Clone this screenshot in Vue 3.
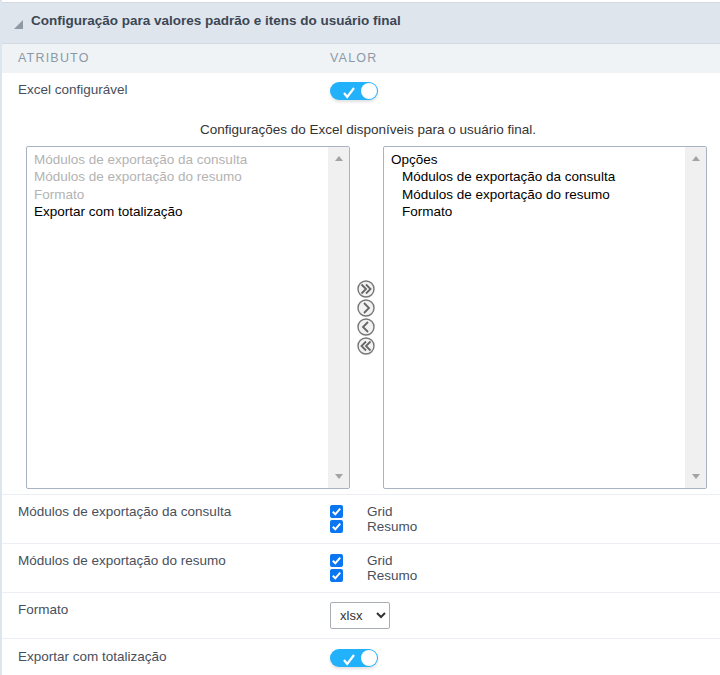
<script setup>
const leftItems = [
  { label: 'Módulos de exportação da consulta', off: true },
  { label: 'Módulos de exportação do resumo', off: true },
  { label: 'Formato', off: true },
  { label: 'Exportar com totalização', off: false }
]
const rightItems = [
  { label: 'Opções', sub: false },
  { label: 'Módulos de exportação da consulta', sub: true },
  { label: 'Módulos de exportação do resumo', sub: true },
  { label: 'Formato', sub: true }
]
const moves = [
  { name: 'all-right', d: 'M4.5 4.5 9 9 4.5 13.5M9 4.5 13.5 9 9 13.5' },
  { name: 'right', d: 'M7 4 12 9 7 14' },
  { name: 'left', d: 'M11 4 6 9 11 14' },
  { name: 'all-left', d: 'M9 4.5 4.5 9 9 13.5M13.5 4.5 9 9 13.5 13.5' }
]
const checkRows = ['Módulos de exportação da consulta', 'Módulos de exportação do resumo']
</script>

<template>
  <div class="page">
    <div class="panel-title">
      <span class="caret"></span>
      <span>Configuração para valores padrão e itens do usuário final</span>
    </div>
    <div class="row head">
      <div class="col-a">ATRIBUTO</div>
      <div>VALOR</div>
    </div>
    <div class="row first">
      <div class="col-a label">Excel configurável</div>
      <div class="toggle">
        <svg class="tick" width="14" height="13" viewBox="0 0 14 13"><path d="M2 7 5.2 11 12 2" fill="none" stroke="#fff" stroke-width="2.2"/></svg>
        <span class="knob"></span>
      </div>
    </div>
    <div class="double">
      <div class="double-title">Configurações do Excel disponíveis para o usuário final.</div>
      <div class="double-body">
        <div class="listbox">
          <div class="items">
            <div v-for="i in leftItems" :key="i.label" :class="{ off: i.off }">{{ i.label }}</div>
          </div>
          <div class="scroll"><span class="up"></span><span class="down"></span></div>
        </div>
        <div class="moves">
          <svg v-for="m in moves" :key="m.name" width="18" height="18" viewBox="0 0 18 18">
            <circle cx="9" cy="9" r="8" fill="#f2f2f2" stroke="#777" stroke-width="1.4"/>
            <path :d="m.d" fill="none" stroke="#666" stroke-width="1.8"/>
          </svg>
        </div>
        <div class="listbox">
          <div class="items">
            <div v-for="i in rightItems" :key="i.label" :class="{ sub: i.sub }">{{ i.label }}</div>
          </div>
          <div class="scroll"><span class="up"></span><span class="down"></span></div>
        </div>
      </div>
    </div>
    <div v-for="c in checkRows" :key="c" class="row check-row">
      <div class="col-a label">{{ c }}</div>
      <div class="checks">
        <div v-for="o in ['Grid', 'Resumo']" :key="o" class="check">
          <span class="box">
            <svg width="13" height="13" viewBox="0 0 13 13"><path d="M2.8 6.8 5.3 9.3 10.2 3.6" fill="none" stroke="#fff" stroke-width="2"/></svg>
          </span>
          <span>{{ o }}</span>
        </div>
      </div>
    </div>
    <div class="row format-row">
      <div class="col-a label">Formato</div>
      <select class="format"><option>xlsx</option></select>
    </div>
    <div class="row last">
      <div class="col-a label">Exportar com totalização</div>
      <div class="toggle">
        <svg class="tick" width="14" height="13" viewBox="0 0 14 13"><path d="M2 7 5.2 11 12 2" fill="none" stroke="#fff" stroke-width="2.2"/></svg>
        <span class="knob"></span>
      </div>
    </div>
  </div>
</template>

<style>
html, body { margin: 0; background: #fff; overflow: hidden; }
</style>

<style scoped>
.page {
  width: 720px;
  height: 675px;
  box-sizing: border-box;
  padding-top: 2px;
  border-left: 2px solid #dce6ef;
  font-family: "Liberation Sans", Arial, sans-serif;
  font-size: 13.5px;
  line-height: 17.4px;
  color: #000;
  overflow: hidden;
}
.panel-title {
  height: 42px;
  box-sizing: border-box;
  margin-left: -2px;
  padding-left: 14px;
  padding-bottom: 4px;
  display: flex;
  align-items: center;
  gap: 8px;
  background: #dfe5ed;
  border-top: 1px solid #d3dae3;
  border-bottom: 1px solid #d3dae3;
  color: #3b4754;
  font-weight: 700;
  font-size: 13.5px;
}
.caret {
  width: 0;
  height: 0;
  border-style: solid;
  border-width: 0 0 9px 9px;
  border-color: transparent transparent #8f99a3 transparent;
  margin-top: 6px;
}
.row { display: flex; box-sizing: border-box; padding-left: 16px; }
.col-a { width: 312px; flex: none; }
.head {
  height: 29px;
  align-items: center;
  background: #f0f3f6;
  color: #8a99a8;
  font-size: 12.5px;
  letter-spacing: 1.2px;
}
.label { color: #47505c; }
.first { height: 35px; padding-top: 8px; }
.toggle {
  position: relative;
  width: 48px;
  height: 18px;
  margin-top: 1px;
  border-radius: 9px;
  background: #22b1fb;
  box-shadow: 0 2px 3px rgba(0, 0, 0, 0.12);
}
.tick { position: absolute; left: 12px; top: 4px; }
.knob {
  position: absolute;
  right: 1px;
  top: 1px;
  width: 16px;
  height: 16px;
  border-radius: 50%;
  background: #fff;
}
.double { height: 387px; box-sizing: border-box; border-bottom: 1px solid #eceff4; }
.double-title { height: 38px; padding: 13px 0 0 14px; box-sizing: border-box; text-align: center; color: #333; }
.double-body { display: flex; padding-left: 24px; }
.listbox {
  width: 324px;
  height: 343px;
  box-sizing: border-box;
  display: flex;
  border: 1px solid #a9b2c0;
  border-radius: 2px;
  background: #fff;
}
.items { flex: 1; padding: 4px 7px; }
.off { color: #b3b3b3; }
.sub { padding-left: 11px; }
.scroll {
  width: 21px;
  background: #f0f0f0;
  display: flex;
  flex-direction: column;
  justify-content: space-between;
  align-items: center;
  padding: 9px 0;
  box-sizing: border-box;
}
.up, .down { width: 0; height: 0; border-style: solid; border-color: transparent; }
.up { border-width: 0 4.5px 5px; border-bottom-color: #a3a3a3; }
.down { border-width: 5px 4.5px 0; border-top-color: #a3a3a3; }
.moves {
  width: 33px;
  padding: 134px 2px 0 0;
  box-sizing: border-box;
  display: flex;
  flex-direction: column;
  align-items: center;
  gap: 1px;
}
.check-row { height: 49px; padding-top: 8px; border-bottom: 1px solid #eceff4; }
.checks { display: flex; flex-direction: column; padding-top: 1px; }
.check { display: flex; align-items: center; height: 15px; color: #47505c; }
.box {
  width: 13px;
  height: 13px;
  margin-right: 24px;
  border-radius: 2px;
  background: #0b76ef;
  display: flex;
}
.format-row { height: 46px; padding-top: 8px; border-bottom: 1px solid #eceff4; }
.format {
  width: 60px;
  height: 27px;
  margin-top: 1px;
  box-sizing: border-box;
  border: 1px solid #a9aeb6;
  border-radius: 2px;
  background: #fff;
  color: #333;
  font-family: "Liberation Sans", Arial, sans-serif;
  font-size: 13px;
  padding-left: 5px;
}
.last { padding-top: 9px; }
</style>
